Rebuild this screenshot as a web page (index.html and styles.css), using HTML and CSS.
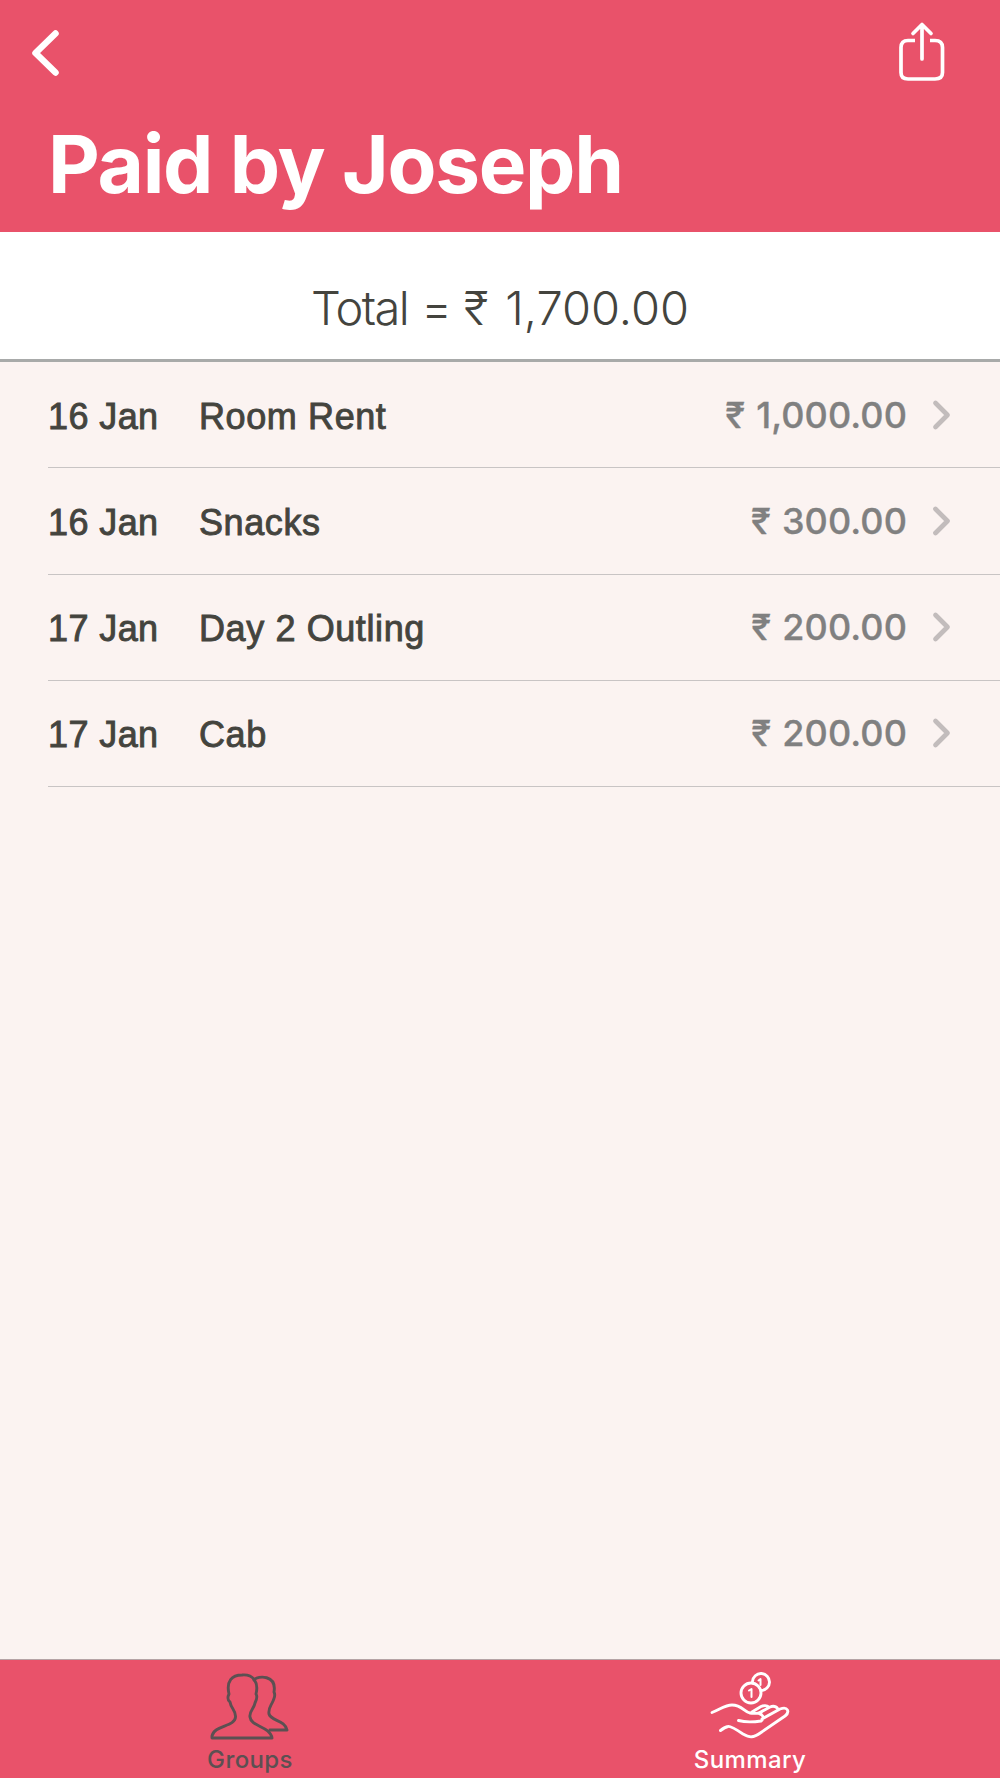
FILE: index.html
```html
<!DOCTYPE html>
<html lang="en">
<head>
    <meta charset="UTF-8">
    <meta name="viewport" content="width=device-width, initial-scale=1.0">
    <title>Paid by Joseph</title>
    <link rel="stylesheet" href="styles.css">
</head>
<body>
    <div class="app">
        <header class="header">
            <div class="nav">
                <a class="back" href="#" aria-label="Back">
                    <svg width="28" height="47" viewBox="0 0 28 47">
                        <path d="M24.500 4.500 L4.500 24 L24.500 43.500"/>
                    </svg>
                </a>
                <a class="share" href="#" aria-label="Share">
                    <svg width="48" height="60" viewBox="0 0 48 60">
                        <path d="M16 18.500 H9 Q2 18.500 2 25.500 V50.500 Q2 57 9 57 H36 Q43.500 57 43.500 50.500 V25.500 Q43.500 18.500 36 18.500 H31"/>
                        <path class="arrow" d="M23 37 V3 M14 11.500 L23 2.500 L32 11.500"/>
                    </svg>
                </a>
            </div>
            <h1>Paid by Joseph</h1>
        </header>

        <div class="total">
            <span class="label">Total</span>
            <span class="equals">=</span>
            <span class="rupee">₹</span>
            <span>1,700.00</span>
        </div>

        <ul class="list">
            <li>
                <span class="date">16 Jan</span>
                <span class="name">Room Rent</span>
                <span class="amount"><span class="rupee">₹</span>1,000.00</span>
                <svg class="chevron" width="18" height="30" viewBox="0 0 18 30"><path d="M2.500 3 L14.500 15 L2.500 27"/></svg>
            </li>
            <li>
                <span class="date">16 Jan</span>
                <span class="name">Snacks</span>
                <span class="amount"><span class="rupee">₹</span>300.00</span>
                <svg class="chevron" width="18" height="30" viewBox="0 0 18 30"><path d="M2.500 3 L14.500 15 L2.500 27"/></svg>
            </li>
            <li>
                <span class="date">17 Jan</span>
                <span class="name">Day 2 Outling</span>
                <span class="amount"><span class="rupee">₹</span>200.00</span>
                <svg class="chevron" width="18" height="30" viewBox="0 0 18 30"><path d="M2.500 3 L14.500 15 L2.500 27"/></svg>
            </li>
            <li>
                <span class="date">17 Jan</span>
                <span class="name">Cab</span>
                <span class="amount"><span class="rupee">₹</span>200.00</span>
                <svg class="chevron" width="18" height="30" viewBox="0 0 18 30"><path d="M2.500 3 L14.500 15 L2.500 27"/></svg>
            </li>
        </ul>

        <nav class="tabs">
            <a class="tab groups" href="#">
                <svg width="80" height="68" viewBox="0 0 80 68">
                    <path d="M2 65 V63 C4 52 25 54 25.500 44 C26 37 21 36 20 29 C17 27 18 23 19 21 C16 8 22 2 32 2 C43 1 49 9 46 21 C48 24 46 28 45 30 C44 36 39 38 40 44 C41 54 60 53 62 65 Z"/>
                    <path d="M44 7 C48 2 67 2 64 19 C66 23 64 25 63 28 C61 33 58 35 59 41 C61 48 75 47 77 57 H60"/>
                </svg>
                <span>Groups</span>
            </a>
            <a class="tab summary" href="#">
                <svg width="80" height="68" viewBox="-9 0 80 68">
                    <circle cx="32" cy="20" r="10"/>
                    <path d="M33.500 8.500 A8.500 8.500 0 1 1 42 17.500"/>
                    <path class="one" d="M30 17.500 L32.500 16 V24 M39.500 7.500 L41.500 6 V12"/>
                    <path d="M-7 39.500 C2 36 6 32 13 32 C23 32 25 39 31 40 C35 41 39 40 42 40"/>
                    <path d="M19.500 47.500 C27 49.500 35 49 42 48 Q47 44 41 41 M33 39 L42 33.500 Q47 31.500 50 34 M40 40 L51 34 Q56 32 59 36 M43 46 L61 36 C69 33 71 39 66 43 L42 59.500 C34 65 31 65 24 61 C18 57 11 53 9 53.500 Q6 54 1.500 57.500"/>
                </svg>
                <span>Summary</span>
            </a>
        </nav>
    </div>
</body>
</html>
```
FILE: styles.css
```css
* {
    box-sizing: border-box;
}
body {
    margin: 0;
    font-family: "Liberation Sans", Arial, sans-serif;
    background-color: #fbf3f1;
    color: #44443e;
}
a {
    color: inherit;
    text-decoration: none;
}
svg {
    display: block;
    fill: none;
    stroke: currentColor;
    stroke-linecap: round;
    stroke-linejoin: round;
    overflow: visible;
}
.app {
    display: flex;
    flex-direction: column;
    height: 1778px;
}
.header {
    height: 232px;
    background-color: #e9526a;
    color: #fff;
}
.nav {
    display: flex;
    justify-content: space-between;
    height: 119px;
    padding: 22px 53px 0 31px;
}
.back svg {
    margin-top: 7px;
    stroke-width: 6.5;
}
.share svg {
    stroke-width: 3.7;
    stroke-linecap: butt;
}
.share .arrow {
    stroke-linecap: round;
}
h1 {
    margin: 0;
    padding-left: 48px;
    font-family: Inter, sans-serif;
    font-size: 80px;
    font-weight: 700;
    line-height: 90px;
    letter-spacing: -1.3px;
}
.total {
    display: flex;
    justify-content: center;
    height: 130px;
    padding-top: 47px;
    background-color: #fff;
    border-bottom: 3px solid #a8aaa9;
    font-family: Inter, sans-serif;
    font-size: 47px;
    font-weight: 300;
    line-height: 58px;
}
.total .label {
    letter-spacing: -1.6px;
}
.total .equals {
    margin-left: 13px;
}
.total .rupee {
    margin: 0 17px 0 12px;
}
.list {
    flex: 1;
    margin: 0;
    padding: 0 0 0 48px;
    list-style: none;
}
.list li {
    display: flex;
    align-items: center;
    height: 106.25px;
    padding-right: 49px;
    border-bottom: 1px solid #c8c4c4;
    font-size: 36px;
}
.date,
.name {
    padding-top: 4px;
    letter-spacing: 0.6px;
    -webkit-text-stroke: 0.9px currentColor;
}
.date {
    width: 151px;
    letter-spacing: 0.4px;
}
.name {
    flex: 1;
}
.amount {
    color: #808080;
    font-family: Inter, sans-serif;
    font-size: 36px;
    font-weight: 500;
    letter-spacing: 0.1px;
    -webkit-text-stroke: 0.3px currentColor;
}
.amount .rupee {
    margin-right: 11px;
}
.chevron {
    margin-left: 26px;
    color: #c2bcbc;
    stroke-width: 4.7;
}
.tabs {
    display: flex;
    height: 119px;
    background-color: #e9526a;
    border-top: 1px solid #b5a3a5;
}
.tab {
    display: flex;
    flex: 1;
    flex-direction: column;
    align-items: center;
    padding-top: 13px;
    font-family: Inter, sans-serif;
    font-size: 24px;
    font-weight: 500;
    line-height: 30px;
    letter-spacing: 0.4px;
}
.tab svg {
    margin-bottom: 4px;
    stroke-width: 2.9;
}
.groups {
    color: #5c5052;
}
.summary {
    color: #fff;
}
.summary .one {
    stroke-width: 2;
}
```
